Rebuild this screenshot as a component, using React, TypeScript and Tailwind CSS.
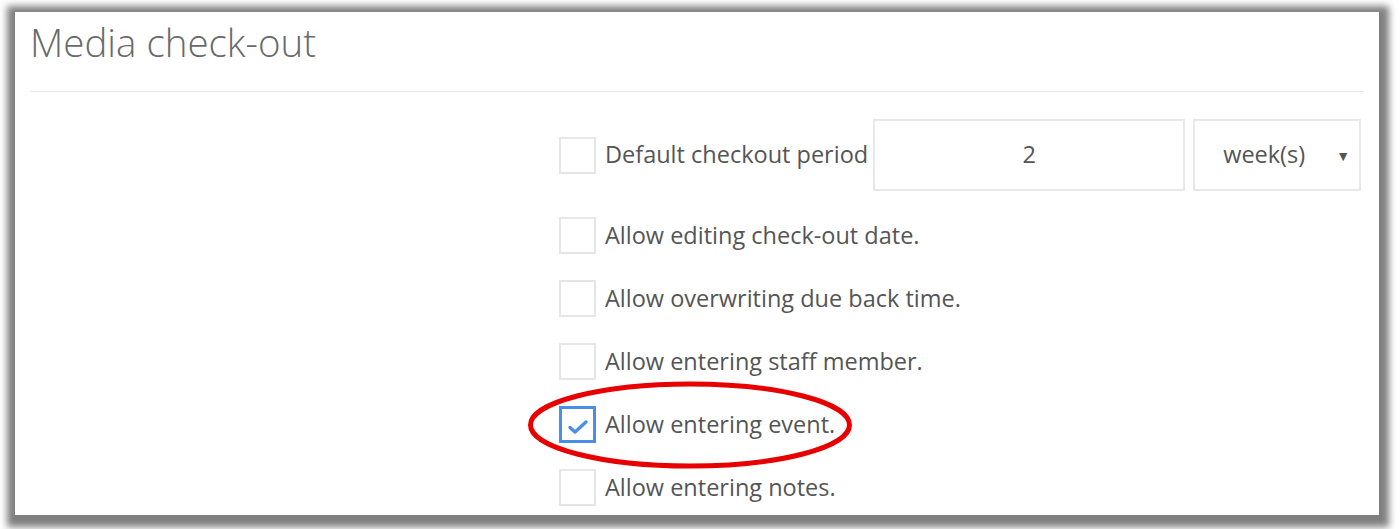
type Option = {
  label: string;
  checked?: boolean;
};

const options: Option[] = [
  { label: "Allow editing check-out date." },
  { label: "Allow overwriting due back time." },
  { label: "Allow entering staff member." },
  { label: "Allow entering event.", checked: true },
  { label: "Allow entering notes." },
];

function Box({ checked }: { checked?: boolean }) {
  return (
    <span
      className={
        checked
          ? "flex h-[37px] w-[37px] shrink-0 items-center justify-center border-[3px] border-[#4a8fe6] bg-white"
          : "flex h-[37px] w-[37px] shrink-0 items-center justify-center border-2 border-[#e6e6e6] bg-white"
      }
    >
      {checked ? (
        <svg className="mt-[4px]" width="22" height="16" viewBox="0 0 22 16" fill="none">
          <path d="M3 8.5l5 4.5 11-10" stroke="#4a8fe6" strokeWidth="3.4" strokeLinecap="round" strokeLinejoin="round" />
        </svg>
      ) : null}
    </span>
  );
}

export default function App() {
  return (
    <div className="h-[529px] w-[1400px] overflow-hidden bg-white pl-[15px] pt-[12px] font-['Open_Sans',sans-serif]">
      <div className="relative h-[503px] w-[1364px] overflow-hidden bg-white shadow-[1px_3px_7px_9px_rgba(0,0,0,0.5)]">
        <div className="px-[15px]">
          <h1 className="pt-[6px] text-[38.5px] font-light leading-[49px] text-[#6a6a6a]">Media check-out</h1>
          <div className="mt-[24px] h-px bg-[#e6e6e6]" />
        </div>

        <div className="pl-[544px] pt-[27px] text-[23.5px] text-[#555]">
          <div className="flex h-[72px] items-center">
            <Box />
            <span className="ml-[9px] whitespace-nowrap">Default checkout period</span>
            <div className="ml-[5px] flex h-[72px] w-[312px] items-center justify-center border-2 border-[#e8e8e8]">2</div>
            <div className="ml-[8px] flex h-[72px] w-[168px] items-center border-2 border-[#e8e8e8] pl-[28px] pr-[9px]">
              <span className="flex-1">week(s)</span>
              <span className="text-[14px] text-[#555]">▼</span>
            </div>
          </div>

          <div className="mt-[26px] flex flex-col gap-[26px]">
            {options.map((option) => (
              <label className="flex h-[37px] items-center" key={option.label}>
                <Box checked={option.checked} />
                <span className="ml-[9px] whitespace-nowrap">{option.label}</span>
              </label>
            ))}
          </div>
        </div>

        <svg className="absolute left-0 top-0" width="1364" height="503" viewBox="0 0 1364 503" fill="none">
          <ellipse cx="675" cy="413" rx="159.5" ry="41" stroke="#e80000" strokeWidth="5" />
        </svg>
      </div>
    </div>
  );
}
